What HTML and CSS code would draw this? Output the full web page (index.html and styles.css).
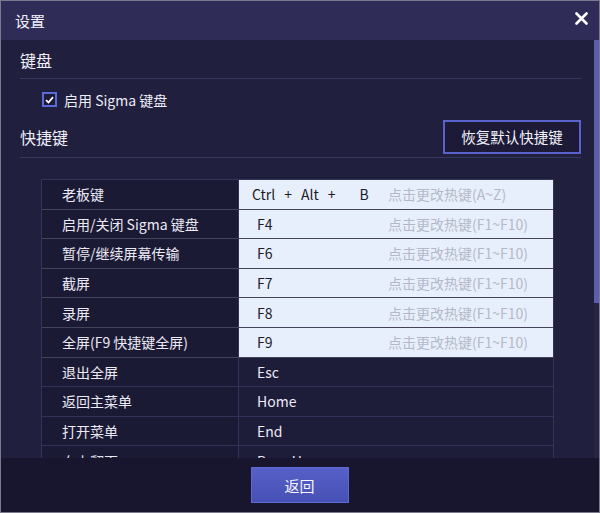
FILE: index.html
```html
<!DOCTYPE html>
<html lang="zh-CN">
<head>
  <meta charset="UTF-8" />
  <title>设置</title>
  <link rel="stylesheet" href="styles.css">
</head>
<body>
  <div class="window">
    <div class="titlebar">
      <span class="title">设置</span>
      <svg class="close" width="13" height="13" viewBox="0 0 13 13">
        <path d="M1.5 1.5 L11.5 11.5 M11.5 1.5 L1.5 11.5" stroke="#fff" stroke-width="2.6" stroke-linecap="round"/>
      </svg>
    </div>

    <div class="body">
      <div class="scroll">
        <div class="section-head">键盘</div>
        <div class="check-row">
          <span class="checkbox">
            <svg width="9" height="8" viewBox="0 0 9 8">
              <path d="M1 4.2 L3.5 6.5 L8 1.2" stroke="#fff" stroke-width="1.8" fill="none"/>
            </svg>
          </span>
          <span>启用 Sigma 键盘</span>
        </div>

        <div class="section-head shortcut-head">
          <span>快捷键</span>
          <button class="reset-btn">恢复默认快捷键</button>
        </div>

        <div class="hotkeys">
          <div class="row editable">
            <div class="name">老板键</div>
            <div class="key combo">
              <span class="keys"><span>Ctrl</span><span class="plus">+</span><span>Alt</span><span class="plus">+</span><span class="letter">B</span></span>
              <span class="hint">点击更改热键(A~Z)</span>
            </div>
          </div>
          <div class="row editable">
            <div class="name">启用/关闭 Sigma 键盘</div>
            <div class="key"><span class="keys">F4</span><span class="hint">点击更改热键(F1~F10)</span></div>
          </div>
          <div class="row editable">
            <div class="name">暂停/继续屏幕传输</div>
            <div class="key"><span class="keys">F6</span><span class="hint">点击更改热键(F1~F10)</span></div>
          </div>
          <div class="row editable">
            <div class="name">截屏</div>
            <div class="key"><span class="keys">F7</span><span class="hint">点击更改热键(F1~F10)</span></div>
          </div>
          <div class="row editable">
            <div class="name">录屏</div>
            <div class="key"><span class="keys">F8</span><span class="hint">点击更改热键(F1~F10)</span></div>
          </div>
          <div class="row editable">
            <div class="name">全屏(F9 快捷键全屏)</div>
            <div class="key"><span class="keys">F9</span><span class="hint">点击更改热键(F1~F10)</span></div>
          </div>
          <div class="row">
            <div class="name">退出全屏</div>
            <div class="key"><span class="keys">Esc</span></div>
          </div>
          <div class="row">
            <div class="name">返回主菜单</div>
            <div class="key"><span class="keys">Home</span></div>
          </div>
          <div class="row">
            <div class="name">打开菜单</div>
            <div class="key"><span class="keys">End</span></div>
          </div>
          <div class="row">
            <div class="name">向上翻页</div>
            <div class="key"><span class="keys">Page Up</span></div>
          </div>
        </div>
      </div>

      <div class="scrollbar">
        <div class="thumb"></div>
      </div>
    </div>

    <div class="footer">
      <button class="back-btn">返回</button>
    </div>
  </div>
</body>
</html>
```

FILE: styles.css
```css
* {
  margin: 0;
  padding: 0;
  box-sizing: border-box;
}
body {
  font-family: "Noto Sans CJK SC", "Noto Sans", sans-serif;
  background: #201f3d;
  color: #eceaf6;
}
.window {
  width: 600px;
  height: 513px;
  border: 1px solid #7b7a8c;
  display: flex;
  flex-direction: column;
  background: #201f3d;
  overflow: hidden;
}
.titlebar {
  height: 39px;
  flex-shrink: 0;
  background: #2f2d58;
  display: flex;
  align-items: center;
  justify-content: space-between;
  padding: 0 11px 0 14px;
}
.title {
  font-size: 15px;
  color: #f2f1fa;
}
.close {
  margin-bottom: 4px;
}
.body {
  display: flex;
  height: 418px;
  flex-shrink: 0;
}
.scroll {
  flex: 1;
  overflow: hidden;
  padding: 0 13px 0 19px;
}
.scrollbar {
  width: 5px;
  background: #252446;
}
.thumb {
  height: 263px;
  background: #5b5ea9;
}
.section-head {
  height: 39px;
  display: flex;
  align-items: center;
  padding-top: 2px;
  font-size: 16px;
  color: #f1f0fa;
  border-bottom: 1px solid #383760;
}
.check-row {
  height: 41px;
  display: flex;
  align-items: center;
  gap: 7px;
  padding-left: 22px;
  font-size: 14px;
  color: #eeedf8;
}
.checkbox {
  width: 15px;
  height: 15px;
  border: 2px solid #5a6ad9;
  background: #1c1b36;
  display: flex;
  align-items: center;
  justify-content: center;
}
.shortcut-head {
  height: 38px;
  justify-content: space-between;
  padding-top: 0;
}
.shortcut-head span {
  padding-bottom: 3px;
}
.reset-btn {
  width: 138px;
  height: 34px;
  margin-bottom: 4px;
  border: 2px solid #5a63c9;
  background: #1c1a36;
  color: #f3f2fb;
  font-family: inherit;
  font-size: 14.5px;
}
.hotkeys {
  margin: 21px 0 0 21px;
  width: 513px;
  border-top: 1px solid #34335a;
  border-left: 1px solid #34335a;
  border-right: 1px solid #34335a;
}
.row {
  display: grid;
  grid-template-columns: 197px 1fr;
  height: 29.6px;
  border-bottom: 1px solid #33325a;
  font-size: 14px;
}
.name {
  background: #1b1a34;
  border-right: 1px solid #33325a;
  padding-left: 20px;
  display: flex;
  align-items: center;
  color: #eceaf6;
}
.key {
  display: flex;
  align-items: center;
  padding-left: 18px;
  background: #1d1c39;
  color: #eceaf6;
}
.row.editable {
  border-bottom-color: #44435a;
}
.row.editable .key {
  background: #e7effc;
  color: #1b1b2a;
}
.keys {
  width: 131px;
  flex-shrink: 0;
}
.combo {
  padding-left: 13px;
}
.combo .keys {
  width: 136px;
}
.plus {
  margin: 0 9px;
}
.letter {
  margin-left: 15px;
}
.hint {
  color: #b5b9c7;
}
.footer {
  flex: 1;
  background: #17162e;
  display: flex;
  justify-content: center;
  align-items: flex-start;
  padding-top: 9px;
  padding-right: 1px;
}
.back-btn {
  width: 98px;
  height: 36px;
  border: 1px solid #5f69d3;
  background: linear-gradient(180deg, #5660c8 0%, #4650b4 100%);
  color: #f6f6ff;
  font-family: inherit;
  font-size: 15px;
}
```
